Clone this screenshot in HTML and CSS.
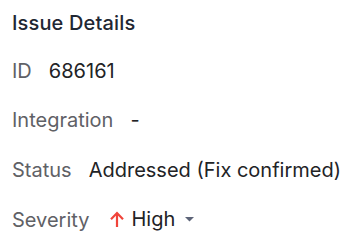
FILE: index.html
```html
<!DOCTYPE html>
<html>
<head>
<meta charset="utf-8">
<link rel="stylesheet" href="styles.css">
</head>
<body>
<section class="panel">
  <h2 class="title">Issue Details</h2>
  <div class="row"><span class="label">ID</span><span class="value">686161</span></div>
  <div class="row"><span class="label">Integration</span><span class="value">-</span></div>
  <div class="row"><span class="label">Status</span><span class="value">Addressed (Fix confirmed)</span></div>
  <div class="row"><span class="label">Severity</span><span class="value severity">
    <svg class="arrow" width="14" height="16" viewBox="0 0 14 16"><path d="M7 16V2.2M1 8.2l6-6.2 6 6.2" fill="none" stroke="#f0443a" stroke-width="2.2"/></svg>
    <span>High</span>
    <svg class="caret" width="9" height="5" viewBox="0 0 9 5"><path d="M0 0h9L4.5 4.6z" fill="#5d6478"/></svg>
  </span></div>
</section>
</body>
</html>
```
FILE: styles.css
```css
html, body { margin: 0; padding: 0; background: #fff; }
body { font-family: Inter, "Noto Sans", sans-serif; }
.panel { padding: 10px 12px; }
.title { margin: 0 0 -2px; font-size: 20px; font-weight: 500; letter-spacing: 0.15px; color: #1f2733; line-height: 26px; }
.row { display: flex; align-items: baseline; gap: 17px; margin-top: 23.5px; font-size: 20px; line-height: 26px; }
.label { color: #5f6166; }
.value { color: #222326; }
.severity { display: inline-flex; align-items: center; }
.arrow { margin-left: 4px; margin-right: 7px; }
.caret { margin-left: 10px; }
```
